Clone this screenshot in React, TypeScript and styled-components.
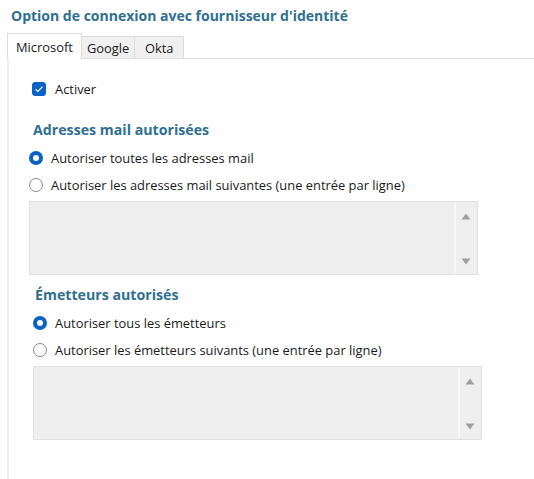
import React, { useState } from 'react';
import styled, { createGlobalStyle } from 'styled-components';

const GlobalStyle = createGlobalStyle`
    html, body {
        margin: 0;
        padding: 0;
        background: #ffffff;
        height: 100%;
    }
    body {
        font-family: 'Open Sans', 'Noto Sans', sans-serif;
        font-size: 12.9px;
        color: #1a1a1a;
    }
    #root {
        height: 100%;
    }
`;

const Page = styled.div`
    height: 479px;
    display: flex;
    flex-direction: column;
    padding: 6px 0 0 7px;
    box-sizing: border-box;
`;

const Title = styled.h1`
    margin: 0 0 7px 4px;
    font-size: 14px;
    font-weight: 700;
    color: #2f6f90;
    line-height: 20px;
`;

const TabBar = styled.div`
    display: flex;
    align-items: flex-end;
    border-bottom: 1px solid #dedede;
    height: 25px;
`;

const Tab = styled.button<{ $active?: boolean }>`
    font-family: inherit;
    font-size: 12.9px;
    color: #1a1a1a;
    border: 1px solid #dcdcdc;
    border-bottom: none;
    margin: 0 0 ${(p) => (p.$active ? '-1px' : '0')} 0;
    padding: 0 ${(p) => (p.$active ? '8px' : '5px')};
    min-width: 50px;
    height: ${(p) => (p.$active ? '26px' : '22px')};
    background: ${(p) => (p.$active ? '#ffffff' : '#f0f0f0')};
    cursor: pointer;
    line-height: 20px;
    text-align: center;
    & + & {
        margin-left: ${(p) => (p.$active ? '0' : '-1px')};
    }
`;

const Panel = styled.div`
    flex: 1;
    border-left: 2px solid #f0f0f0;
    padding: 21px 0 0 20px;
`;

const CheckRow = styled.label`
    display: flex;
    align-items: center;
    gap: 9px;
    margin-left: 3px;
    height: 18px;
    cursor: pointer;
`;

const CheckBox = styled.span<{ $checked: boolean }>`
    width: 14px;
    height: 14px;
    border-radius: 3px;
    box-sizing: border-box;
    background: ${(p) => (p.$checked ? '#0a62c4' : '#fff')};
    border: 1px solid ${(p) => (p.$checked ? '#0a62c4' : '#888')};
    display: flex;
    align-items: center;
    justify-content: center;
`;

const Section = styled.div<{ $shift: number; $top: number }>`
    margin-left: ${(p) => p.$shift}px;
    margin-top: ${(p) => p.$top}px;
`;

const SectionTitle = styled.h2<{ $indent: number }>`
    margin: 0 0 9px ${(p) => p.$indent}px;
    font-size: 14.2px;
    font-weight: 700;
    color: #2f6f90;
    line-height: 20px;
`;

const RadioRow = styled.label`
    display: flex;
    align-items: center;
    gap: 8px;
    height: 18px;
    margin-bottom: 9px;
    cursor: pointer;
`;

const Radio = styled.span<{ $checked: boolean }>`
    width: 14px;
    height: 14px;
    border-radius: 50%;
    box-sizing: border-box;
    background: #fff;
    border: ${(p) => (p.$checked ? '4px solid #0a62c4' : '1px solid #8a8a8a')};
`;

const ListBox = styled.div`
    width: 449px;
    height: 74px;
    box-sizing: border-box;
    border: 1px solid #e2e2e2;
    background: #efefef;
    display: flex;
    padding: 1px;
    margin-top: -2px;
`;

const ListArea = styled.div`
    flex: 1;
    background: #efefef;
`;

const ScrollTrack = styled.div`
    width: 20px;
    border-left: 2px solid #f8f8f8;
    display: flex;
    flex-direction: column;
    align-items: center;
    justify-content: space-between;
    padding: 10px 0 8px;
`;

const Arrow = ({ up }: { up?: boolean }) => (
    <svg width="10" height="7" viewBox="0 0 10 7">
        <path d={up ? 'M5 0.5 L9.5 6.5 L0.5 6.5 Z' : 'M0.5 0.5 L9.5 0.5 L5 6.5 Z'} fill="#a0a0a0" />
    </svg>
);

const Check = () => (
    <svg width="10" height="8" viewBox="0 0 10 8">
        <path d="M1.5 4.2 L3.9 6.4 L8.5 1.6" fill="none" stroke="#fff" strokeWidth="1.2" />
    </svg>
);

interface ChoiceSectionProps {
    title: string;
    options: string[];
    shift: number;
    indent: number;
    top: number;
}

const ChoiceSection = ({ title, options, shift, indent, top }: ChoiceSectionProps) => {
    const [choice, setChoice] = useState(0);
    return (
        <Section $shift={shift} $top={top}>
            <SectionTitle $indent={indent}>{title}</SectionTitle>
            {options.map((opt, i) => (
                <RadioRow key={opt} onClick={() => setChoice(i)}>
                    <Radio $checked={choice === i} />
                    {opt}
                </RadioRow>
            ))}
            <ListBox>
                <ListArea />
                <ScrollTrack>
                    <Arrow up />
                    <Arrow />
                </ScrollTrack>
            </ListBox>
        </Section>
    );
};

export default function App() {
    const [tab, setTab] = useState('Microsoft');
    const [enabled, setEnabled] = useState(true);
    return (
        <>
            <GlobalStyle />
            <Page>
                <Title>Option de connexion avec fournisseur d'identité</Title>
                <TabBar>
                    {['Microsoft', 'Google', 'Okta'].map((t) => (
                        <Tab key={t} $active={tab === t} onClick={() => setTab(t)}>
                            {t}
                        </Tab>
                    ))}
                </TabBar>
                <Panel>
                    <CheckRow onClick={() => setEnabled(!enabled)}>
                        <CheckBox $checked={enabled}>{enabled && <Check />}</CheckBox>
                        Activer
                    </CheckRow>
                    <ChoiceSection
                        title="Adresses mail autorisées"
                        options={[
                            'Autoriser toutes les adresses mail',
                            'Autoriser les adresses mail suivantes (une entrée par ligne)',
                        ]}
                        shift={0}
                        indent={4}
                        top={22}
                    />
                    <ChoiceSection
                        title="Émetteurs autorisés"
                        options={[
                            'Autoriser tous les émetteurs',
                            'Autoriser les émetteurs suivants (une entrée par ligne)',
                        ]}
                        shift={4}
                        indent={2}
                        top={10}
                    />
                </Panel>
            </Page>
        </>
    );
}
